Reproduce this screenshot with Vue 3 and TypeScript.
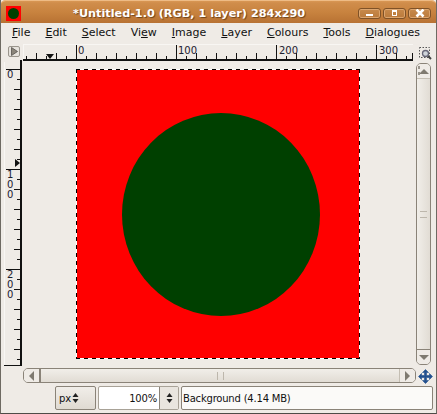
<script setup lang="ts">
const menus = [
  { key: 'F', rest: 'ile' },
  { key: 'E', rest: 'dit' },
  { key: 'S', rest: 'elect' },
  { pre: 'Vi', key: 'e', rest: 'w' },
  { key: 'I', rest: 'mage' },
  { key: 'L', rest: 'ayer' },
  { key: 'C', rest: 'olours' },
  { key: 'T', rest: 'ools' },
  { key: 'D', rest: 'ialogues' },
]
const hTicks: { x: number; h: number }[] = []
for (let i = -5; i <= 33; i++) {
  const x = 54.5 + i * 10.01
  hTicks.push({ x: Math.floor(x) + 0.5, h: i % 10 === 0 ? 14 : i % 2 === 0 ? 6 : 3 })
}
const vTicks: { y: number; w: number }[] = []
for (let i = 0; i <= 29; i++) {
  vTicks.push({ y: 9.5 + i * 10, w: i % 10 === 0 ? 14 : i % 2 === 0 ? 6 : 3 })
}
const hLabels = [
  { t: '0', x: 56 },
  { t: '100', x: 156 },
  { t: '200', x: 257 },
  { t: '300', x: 357 },
]
const vLabels = [
  { t: ['0'], y: 10 },
  { t: ['1', '0', '0'], y: 110 },
  { t: ['2', '0', '0'], y: 210 },
]
</script>

<template>
  <div class="window">
    <header class="titlebar">
      <div class="winicon"><span class="winicon-dot"></span></div>
      <div class="title">*Untitled-1.0 (RGB, 1 layer) 284x290</div>
      <div class="wbtns">
        <button class="wbtn"><span class="min"></span></button>
        <button class="wbtn"><span class="max"></span></button>
        <button class="wbtn">
          <svg width="12" height="10" viewBox="0 0 12 10"><path d="M2.500 1.500l7 7M9.500 1.500l-7 7" stroke="#fff" stroke-width="2.600" fill="none" /></svg>
        </button>
      </div>
    </header>

    <nav class="menubar">
      <span v-for="m in menus" :key="m.key + m.rest" class="menu">{{ m.pre }}<u>{{ m.key }}</u>{{ m.rest }}</span>
    </nav>

    <div class="workspace">
      <div class="cornercell">
        <button class="corner">
          <svg width="9" height="9" viewBox="0 0 9 9"><path d="M1.500 0.500l6 4-6 4z" fill="#8b857a" stroke="#55524c" stroke-width="0.800" /></svg>
        </button>
      </div>
      <div class="hruler">
        <svg class="rticks" width="392" height="17" viewBox="0 0 392 17">
          <rect x="1" y="0" width="390" height="1" fill="#f8f6f3" />
          <rect x="1" y="0" width="1" height="15" fill="#f8f6f3" />
          <rect x="1" y="15" width="390" height="2" fill="#111" />
          <line v-for="t in hTicks" :key="t.x" :x1="t.x" :x2="t.x" :y1="15 - t.h" y2="15" stroke="#111" />
          <line x1="390.500" x2="390.500" y1="9" y2="15" stroke="#111" />
          <path d="M24 10h8l-4 5z" fill="#111" />
        </svg>
        <span v-for="l in hLabels" :key="l.t" class="hlabel" :style="{ left: l.x + 'px' }">{{ l.t }}</span>
      </div>
      <button class="zoomfit">
        <svg width="13" height="13" viewBox="0 0 13 13">
          <rect x="0.500" y="0.500" width="10" height="10" fill="none" stroke="#555" stroke-dasharray="1.500 1.500" />
          <circle cx="6.500" cy="6.500" r="3" fill="#cfd4da" stroke="#667" stroke-width="1.300" />
          <path d="M9 9l3 3" stroke="#444" stroke-width="2" />
        </svg>
      </button>

      <div class="vruler">
        <svg class="rticks" width="18" height="306" viewBox="0 0 18 306">
          <rect x="0" y="2" width="1" height="303" fill="#f8f6f3" />
          <rect x="16" y="0" width="2" height="306" fill="#111" />
          <rect x="0" y="305" width="18" height="1" fill="#111" />
          <line v-for="t in vTicks" :key="t.y" :x1="16 - t.w" x2="16" :y1="t.y" :y2="t.y" stroke="#111" />
          <path d="M11 99v8l5-4z" fill="#111" />
        </svg>
        <div v-for="l in vLabels" :key="l.y" class="vlabel" :style="{ top: l.y + 'px' }">
          <span v-for="(c, i) in l.t" :key="i">{{ c }}</span>
        </div>
      </div>

      <main class="canvas">
        <div class="frame">
          <div class="image"><div class="circle"></div></div>
        </div>
      </main>

      <div class="vscroll">
        <div class="arrow-cap top"><span class="tri-up"></span></div>
        <div class="vthumb"><span class="grip"></span></div>
        <div class="arrow-cap bottom"><span class="tri-down"></span></div>
      </div>

      <div class="qmask"><span class="qinner"></span></div>
      <div class="hscroll">
        <div class="harrow left"><span class="tri-left"></span></div>
        <div class="hthumb"><span class="hgrip"></span></div>
        <div class="harrow right"><span class="tri-right"></span></div>
      </div>
      <div class="nav">
        <svg width="15" height="15" viewBox="0 0 15 15">
          <path d="M7.500 0.500l3 3h-2v3h3v-2l3 3-3 3v-2h-3v3h2l-3 3-3-3h2v-3h-3v2l-3-3 3-3v2h3v-3h-2z" fill="#22508f" stroke="#22508f" stroke-width="0.600" />
        </svg>
      </div>
    </div>

    <footer class="statusbar">
      <div class="unit">
        <span>px</span>
        <svg width="7" height="10" viewBox="0 0 7 10"><path d="M3.500 0l3 4h-6zM3.500 10l3-4h-6z" fill="#222" /></svg>
      </div>
      <div class="zoomcombo">
        <span class="zoomval">100%</span>
        <span class="zoomarrows">
          <svg width="7" height="10" viewBox="0 0 7 10"><path d="M3.500 0l3 4h-6zM3.500 10l3-4h-6z" fill="#222" /></svg>
        </span>
      </div>
      <div class="status">Background (4.14 MB)</div>
    </footer>
  </div>
</template>

<style scoped>
.window {
  width: 437px;
  height: 414px;
  box-sizing: border-box;
  display: flex;
  flex-direction: column;
  overflow: hidden;
  background: #efebe6;
  font-family: "DejaVu Sans", sans-serif;
  font-size: 11px;
  color: #111;
  border-left: 1px solid #6e6a62;
  border-right: 1px solid #6e6a62;
  border-bottom: 1px solid #4d4b47;
}
.titlebar {
  height: 23px;
  box-sizing: border-box;
  margin: 0 -1px;
  flex: none;
  display: flex;
  align-items: center;
  padding: 3px 4px 0 6px;
  border-radius: 6px 6px 0 0;
  background: linear-gradient(#dd9c58 0, #d08d4b 3px, #c8833f 12px, #b87233 23px);
  box-shadow: inset 0 1px 0 #eebb85;
}
.winicon {
  width: 15px;
  height: 15px;
  background: #f00;
  display: flex;
  align-items: center;
  justify-content: center;
  flex: none;
}
.winicon-dot {
  width: 11px;
  height: 11px;
  border-radius: 50%;
  background: #004000;
}
.title {
  flex: 1;
  padding-left: 52px;
  font-weight: bold;
  font-size: 11.250px;
  color: #fff;
  text-shadow: 1px 1px 1px #6d431b;
  white-space: nowrap;
}
.wbtns {
  display: flex;
  gap: 2px;
  padding-right: 2px;
}
.wbtn {
  width: 21px;
  height: 9px;
  padding: 0;
  box-sizing: content-box;
  border: 1px solid #7f5227;
  border-radius: 3px;
  background: linear-gradient(#c88a4c, #ba7a3b);
  box-shadow: inset 0 0 0 1px #dca56e;
  display: flex;
  align-items: center;
  justify-content: center;
  overflow: hidden;
}
.min {
  width: 7px;
  height: 2px;
  margin-top: 4px;
  background: #fff;
}
.max {
  box-sizing: content-box;
  width: 3px;
  height: 3px;
  border: 1px solid #fff;
  border-top-width: 2px;
}
.menubar {
  height: 21px;
  box-sizing: border-box;
  padding: 0 0 2px 11px;
  flex: none;
  display: flex;
  align-items: center;
  gap: 15px;
}
.menu {
  white-space: nowrap;
}
.workspace {
  flex: none;
  display: grid;
  grid-template-columns: 18px 392px 2px 16px;
  grid-template-rows: 16px 306px 18px;
  padding: 0 0 0 4px;
  margin-left: -1px;
}
.cornercell {
  padding: 2px 0 0 4px;
}
.corner {
  width: 12px;
  height: 11px;
  padding: 0;
  border: 1px solid #9a958c;
  border-radius: 2px;
  background: #e6e2dc;
  display: flex;
  align-items: center;
  justify-content: center;
}
.hruler {
  position: relative;
  height: 16px;
}
.rticks {
  position: absolute;
  left: 0;
  top: 0;
  display: block;
}
.hlabel {
  position: absolute;
  top: 2px;
  font-size: 10px;
  line-height: 10px;
  color: #1c2030;
}
.zoomfit {
  grid-column: 3 / 5;
  padding: 2px 0 0 4px;
  border: 0;
  background: none;
  display: flex;
  align-items: center;
  justify-content: center;
}
.vruler {
  position: relative;
  height: 306px;
}
.vlabel {
  position: absolute;
  left: 3px;
  display: flex;
  flex-direction: column;
  font-size: 10px;
  line-height: 10px;
  color: #1c2030;
}
.canvas {
  padding: 9px 0 0 54px;
}
.frame {
  width: 284px;
  height: 290px;
  box-sizing: border-box;
  padding: 1px;
  background-color: #fff;
  background-image:
    repeating-linear-gradient(90deg, #000 0 4px, #fff 4px 8px),
    repeating-linear-gradient(90deg, #000 0 4px, #fff 4px 8px),
    repeating-linear-gradient(180deg, #000 0 4px, #fff 4px 8px),
    repeating-linear-gradient(180deg, #000 0 4px, #fff 4px 8px);
  background-size: 100% 1px, 100% 1px, 1px 100%, 1px 100%;
  background-position: 0 0, 0 100%, 0 0, 100% 0;
  background-repeat: no-repeat;
}
.image {
  height: 288px;
  box-sizing: border-box;
  padding: 43px 0 0 45px;
  background: #f00;
}
.circle {
  width: 198px;
  height: 203px;
  border-radius: 50%;
  background: #004000;
}
.vscroll {
  grid-column: 4;
  grid-row: 2;
  display: flex;
  flex-direction: column;
  margin-top: 3px;
  box-sizing: border-box;
  border: 1px solid #8a8378;
  border-radius: 5px;
  background: #e6e1da;
  height: 302px;
  width: 15px;
  overflow: hidden;
}
.arrow-cap {
  height: 14px;
  flex: none;
  display: flex;
  align-items: center;
  justify-content: center;
  background: #efebe6;
}
.arrow-cap.top {
  border-bottom: 1px solid #c4beb3;
}
.arrow-cap.bottom {
  border-top: 1px solid #8a8378;
}
.vthumb {
  flex: 1;
  background: linear-gradient(90deg, #f1eee9, #e1dcd4);
  display: flex;
  align-items: center;
  justify-content: center;
}
.grip {
  width: 7px;
  height: 5px;
  border-top: 1px solid #bdb7ac;
  border-bottom: 1px solid #bdb7ac;
}
.tri-up, .tri-down {
  width: 0;
  height: 0;
  border-left: 5px solid transparent;
  border-right: 5px solid transparent;
}
.tri-up { border-bottom: 5px solid #7f7a70; }
.tri-down { border-top: 5px solid #7f7a70; }
.qmask {
  display: flex;
  padding: 6px 0 0 4px;
}
.qinner {
  width: 7px;
  height: 7px;
  border: 1px dashed #9a958c;
}
.hscroll {
  grid-column: 2;
  grid-row: 3;
  height: 15px;
  margin: 2px 0 0 1px;
  display: flex;
  box-sizing: border-box;
  border: 1px solid #8a8378;
  border-radius: 5px;
  overflow: hidden;
  width: 393px;
}
.harrow {
  width: 15px;
  flex: none;
  display: flex;
  align-items: center;
  justify-content: center;
  background: #efebe6;
}
.harrow.left { border-right: 2px solid #8a8378; }
.harrow.right { border-left: 1px solid #c4beb3; }
.hthumb {
  flex: 1;
  background: linear-gradient(#f1eee9, #e1dcd4);
  display: flex;
  align-items: center;
  justify-content: center;
}
.hgrip {
  width: 5px;
  height: 8px;
  border-left: 1px solid #bdb7ac;
  border-right: 1px solid #bdb7ac;
}
.tri-left, .tri-right {
  width: 0;
  height: 0;
  border-top: 5px solid transparent;
  border-bottom: 5px solid transparent;
}
.tri-left { border-right: 5px solid #7f7a70; }
.tri-right { border-left: 5px solid #7f7a70; }
.nav {
  grid-column: 3 / 5;
  grid-row: 3;
  padding: 3px 0 0 4px;
}
.statusbar {
  flex: none;
  display: flex;
  align-items: flex-start;
  padding: 2px 3px 0 54px;
  gap: 2px;
  font-size: 10px;
  letter-spacing: -0.200px;
}
.unit {
  width: 41px;
  height: 24px;
  box-sizing: border-box;
  border: 1px solid #8a8378;
  border-radius: 2px;
  background: linear-gradient(#f1eee9, #dfdad2);
  display: flex;
  align-items: center;
  gap: 1px;
  padding-left: 3px;
}
.zoomcombo {
  width: 81px;
  height: 24px;
  box-sizing: border-box;
  border: 1px solid #a8a297;
  border-radius: 2px;
  background: #fff;
  display: flex;
  align-items: center;
}
.zoomval {
  flex: 1;
  text-align: right;
  padding-right: 2px;
}
.zoomarrows {
  width: 18px;
  height: 22px;
  background: #e9e5df;
  border-left: 1px solid #8a8378;
  display: flex;
  align-items: center;
  justify-content: center;
}
.status {
  flex: 1;
  height: 24px;
  box-sizing: border-box;
  border: 1px solid #8a8378;
  border-radius: 2px;
  background: #fbfaf8;
  display: flex;
  align-items: center;
  padding-left: 1px;
  white-space: nowrap;
}
</style>
